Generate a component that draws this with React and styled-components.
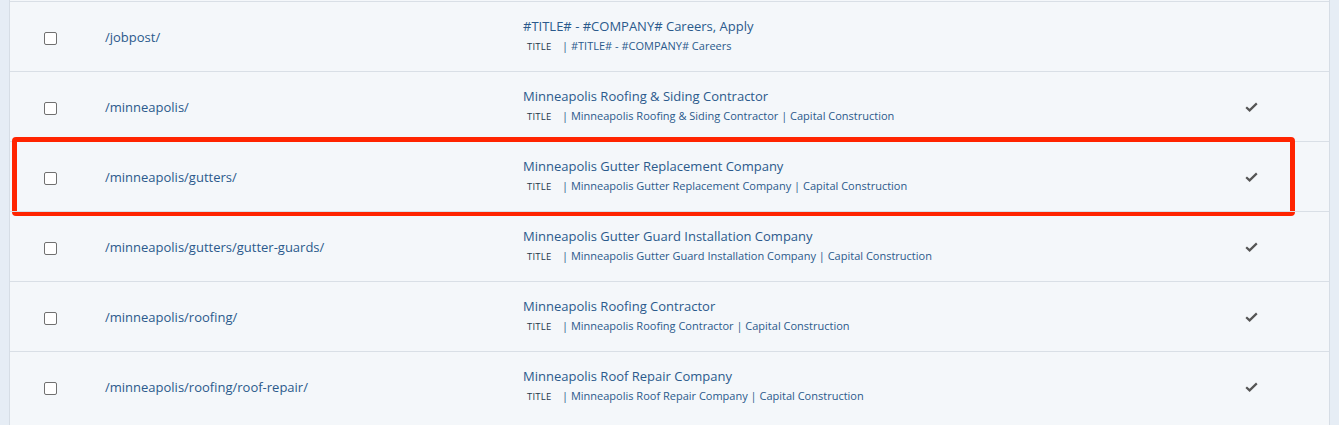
import React from "react";
import styled, { createGlobalStyle } from "styled-components";

const rows = [
  { path: "/jobpost/", title: "#TITLE# - #COMPANY# Careers, Apply", meta: "#TITLE# - #COMPANY# Careers", done: false },
  { path: "/minneapolis/", title: "Minneapolis Roofing & Siding Contractor", meta: "Minneapolis Roofing & Siding Contractor | Capital Construction", done: true },
  { path: "/minneapolis/gutters/", title: "Minneapolis Gutter Replacement Company", meta: "Minneapolis Gutter Replacement Company | Capital Construction", done: true, marked: true },
  { path: "/minneapolis/gutters/gutter-guards/", title: "Minneapolis Gutter Guard Installation Company", meta: "Minneapolis Gutter Guard Installation Company | Capital Construction", done: true },
  { path: "/minneapolis/roofing/", title: "Minneapolis Roofing Contractor", meta: "Minneapolis Roofing Contractor | Capital Construction", done: true },
  { path: "/minneapolis/roofing/roof-repair/", title: "Minneapolis Roof Repair Company", meta: "Minneapolis Roof Repair Company | Capital Construction", done: true },
];

const Check = () => (
  <svg width="13" height="10" viewBox="0 0 13 10">
    <path d="M1.2 5.2 L4.6 8.4 L11.8 1.4" fill="none" stroke="#555" strokeWidth="2.2" strokeLinejoin="miter" />
  </svg>
);

const App = () => {
  return (
    <Page>
      <GlobalStyle />
      <Table>
        {rows.map((r, i) => (
          <Row key={i}>
            {r.marked && <Marker />}
            <BoxCell>
              <Box type="checkbox" />
            </BoxCell>
            <Path>{r.path}</Path>
            <Titles>
              <Title>{r.title}</Title>
              <Meta>
                <Tag>TITLE</Tag>
                <span>| {r.meta}</span>
              </Meta>
            </Titles>
            <Done>{r.done && <Check />}</Done>
          </Row>
        ))}
      </Table>
    </Page>
  );
};

const GlobalStyle = createGlobalStyle`
body {
  margin: 0;
  background: #e6edf5;
  font-family: "Open Sans", "Liberation Sans", sans-serif;
}
`;

const Page = styled.div`
width: 1339px;
height: 425px;
overflow: hidden;
padding-left: 9px;
box-sizing: border-box;
`;

const Table = styled.div`
width: 1321px;
min-height: 425px;
background: #f4f7fa;
border-left: 1px solid #d6dde5;
border-right: 1px solid #d6dde5;
box-sizing: border-box;
padding-top: 1px;
`;

const Row = styled.div`
position: relative;
display: grid;
grid-template-columns: 95px 418px 1fr 85px;
align-items: center;
height: 70px;
border-top: 1px solid #d9dfe6;
box-sizing: border-box;
`;

const Marker = styled.div`
position: absolute;
left: 2px;
top: -5px;
width: 1283px;
height: 79px;
border: 5px solid #ff2400;
border-radius: 4px;
box-sizing: border-box;
pointer-events: none;
`;

const BoxCell = styled.div`
padding-left: 34px;
padding-top: 3px;
display: flex;
`;

const Box = styled.input`
appearance: none;
margin: 0;
width: 13px;
height: 13px;
border: 1.5px solid #707070;
border-radius: 2px;
background: #fff;
box-sizing: border-box;
`;

const Path = styled.div`
font-size: 13px;
color: #2b5a8c;
`;

const Titles = styled.div`
display: flex;
flex-direction: column;
gap: 3px;
margin-top: -4px;
`;

const Title = styled.div`
font-size: 13px;
color: #2b5a8c;
`;

const Meta = styled.div`
font-size: 11px;
color: #2b5a8c;
display: flex;
align-items: baseline;
padding-left: 4px;
`;

const Tag = styled.span`
font-size: 9.5px;
letter-spacing: 0.2px;
color: #25374a;
width: 35px;
`;

const Done = styled.div`
display: flex;
padding-left: 1px;
`;

export default App;
